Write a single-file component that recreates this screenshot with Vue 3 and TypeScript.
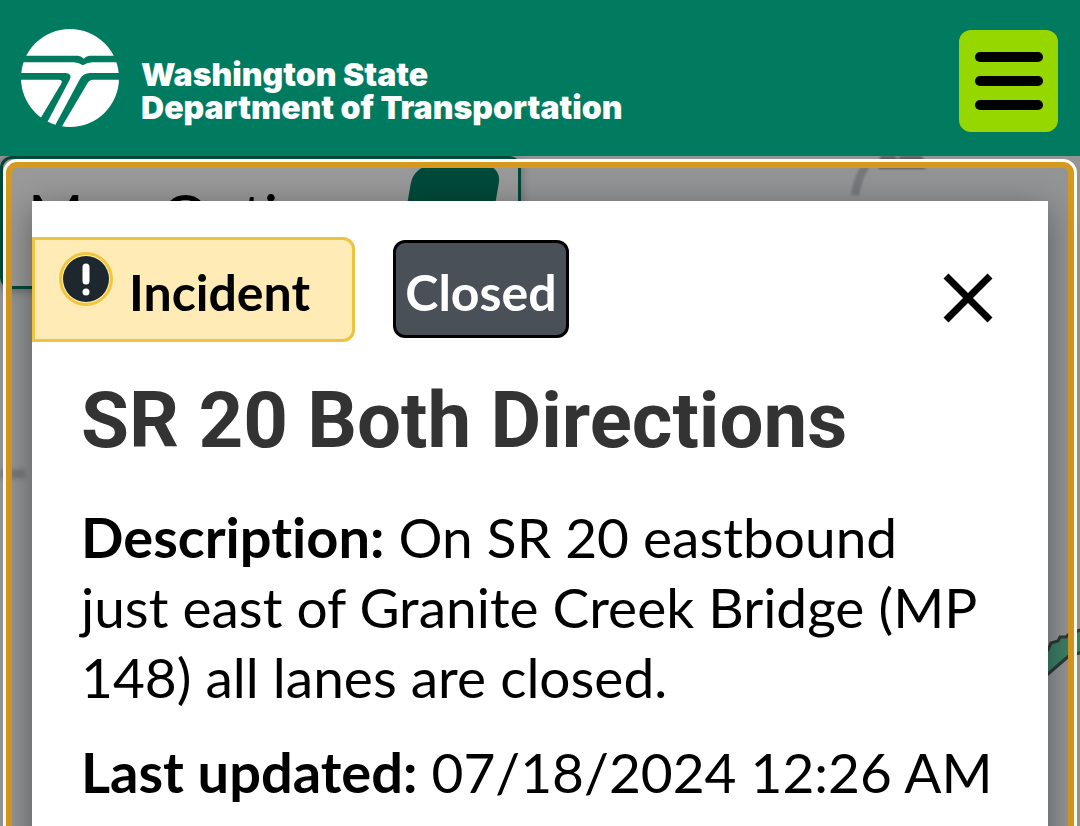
<script setup lang="ts">
import { ref } from 'vue'

interface Detail {
  label: string
  text: string
}

const menuOpen = ref(false)
const optionsOpen = ref(false)
const dialogOpen = ref(true)

const title = 'SR 20 Both Directions'
const details: Detail[] = [
  {
    label: 'Description:',
    text: 'On SR 20 eastbound just east of Granite Creek Bridge (MP 148) all lanes are closed.',
  },
  { label: 'Last updated:', text: '07/18/2024 12:26 AM' },
]
</script>

<template>
  <div class="page">
    <header class="header">
      <a class="brand" href="#">
        <svg class="logo" viewBox="0 0 292 292" aria-hidden="true">
          <circle cx="146" cy="146" r="146" fill="#fff" />
          <g fill="#007b5f">
            <path d="M0 80H170Q181 81 187 89Q193 81 204 80H292V99H212Q196 100 184 108Q174 100 158 99H0Z" />
            <path d="M0 131H134Q154 134 145 151L72 290L52 276L121 161Q124 151 112 151H0Z" />
            <path d="M292 131H205Q186 132 176 148L99 292H121L198 162Q204 151 214 151H292Z" />
          </g>
        </svg>
        <span class="brand-name">Washington State<br />Department of Transportation</span>
      </a>
      <button class="menu" type="button" aria-label="Menu" :aria-expanded="menuOpen" @click="menuOpen = !menuOpen">
        <span class="bar"></span>
        <span class="bar"></span>
        <span class="bar"></span>
      </button>
    </header>

    <main class="map">
      <svg class="road road-top" viewBox="0 0 80 44" aria-hidden="true">
        <path d="M6 39Q9 20 18 8" fill="none" stroke="#76787a" stroke-width="8" />
        <path d="M32 0H46L48 3L52 0H72Q78 6 76 13H30Q28 6 32 0Z" fill="#5c5d5e" />
      </svg>
      <svg class="road road-left" viewBox="0 0 25 12" aria-hidden="true">
        <path d="M0 6H25" stroke="#76787a" stroke-width="9" />
      </svg>
      <svg class="road road-right" viewBox="0 0 40 60" aria-hidden="true">
        <path d="M-4 32L8 24L11 17L18 15L20 11L26 11L30 7L44 3V26L30 29L8 48L-4 56Z" fill="#3c7f66" stroke="#2f3937" stroke-width="3" />
      </svg>

      <section class="options">
        <h2 class="options-title">Map Options</h2>
        <button
          class="toggle"
          type="button"
          aria-label="Toggle map options"
          :aria-expanded="optionsOpen"
          @click="optionsOpen = !optionsOpen"
        ></button>
      </section>

      <div class="focus-frame"></div>

      <article v-if="dialogOpen" class="dialog" role="dialog" aria-labelledby="alert-title">
        <div class="tags">
          <span class="tag incident">
            <svg class="alert" viewBox="0 0 54 54" aria-hidden="true">
              <circle cx="27" cy="27" r="27" fill="#f0c63c" />
              <circle cx="27" cy="27" r="24" fill="#ffefb8" />
              <circle cx="27" cy="27" r="23" fill="#1d272d" />
              <path d="M27 15V29" stroke="#fff" stroke-width="7" stroke-linecap="round" />
              <circle cx="27" cy="40" r="3.5" fill="#fff" />
            </svg>
            <span>Incident</span>
          </span>
          <span class="tag closed">Closed</span>
          <button class="close" type="button" aria-label="Close" @click="dialogOpen = false">
            <svg viewBox="0 0 50 50" aria-hidden="true">
              <path d="M3 3L47 47M47 3L3 47" stroke="#000" stroke-width="7" />
            </svg>
          </button>
        </div>
        <div class="body">
          <h1 id="alert-title" class="title">{{ title }}</h1>
          <p v-for="detail in details" :key="detail.label" class="detail">
            <strong>{{ detail.label }}</strong> {{ detail.text }}
          </p>
        </div>
      </article>
    </main>
  </div>
</template>

<style>
body {
  margin: 0;
}
</style>

<style scoped>
.page {
  display: flex;
  flex-direction: column;
  height: 100vh;
  overflow: hidden;
  font-family: Lato, "Liberation Sans", sans-serif;
  font-variant-ligatures: none;
  color: #000;
}

.header {
  display: flex;
  align-items: flex-start;
  justify-content: space-between;
  box-sizing: border-box;
  height: 156px;
  padding: 29px 22px 0 21px;
  background: #007b5f;
}

.brand {
  display: flex;
  gap: 22px;
  color: #fff;
  text-decoration: none;
}

.logo {
  width: 98px;
  height: 98px;
}

.brand-name {
  padding-top: 29px;
  font-family: Inter, "Liberation Sans", sans-serif;
  font-size: 32px;
  font-weight: 900;
  line-height: 33px;
  white-space: nowrap;
}

.menu {
  display: flex;
  flex-direction: column;
  align-items: center;
  justify-content: center;
  gap: 14px;
  width: 99px;
  height: 102px;
  margin-top: 1px;
  padding: 0;
  border: 0;
  border-radius: 12px;
  background: #97d700;
}

.bar {
  width: 68px;
  height: 10px;
  border-radius: 5px;
  background: #000;
}

.map {
  position: relative;
  flex: 1;
  overflow: hidden;
  background: #929496;
}

.road {
  position: absolute;
}

.road-top {
  top: 0;
  right: 151px;
  width: 80px;
  height: 44px;
  filter: blur(1px);
}

.road-left {
  top: 312px;
  left: 0;
  width: 25px;
  height: 12px;
  filter: blur(2px);
}

.road-right {
  top: 470px;
  right: 0;
  width: 40px;
  height: 60px;
}

.options {
  display: flex;
  align-items: flex-start;
  justify-content: space-between;
  box-sizing: border-box;
  width: 521px;
  height: 133px;
  padding: 6px 18px 0 25px;
  border: 3px solid #00483a;
  border-radius: 12px;
  background: #999;
  box-shadow: 0 2px 10px rgba(0, 0, 0, 0.3);
}

.options-title {
  margin: 20px 0 0;
  font-size: 60px;
  font-weight: 400;
  line-height: 60px;
}

.toggle {
  width: 88px;
  height: 80px;
  margin-right: 5px;
  padding: 0;
  border: 0;
  border-radius: 18px;
  background: #004a3a;
  transform: skewX(-10deg);
}

.focus-frame {
  position: absolute;
  inset: 3px 3px -20px;
  border: 3px solid #fffdf0;
  border-radius: 14px;
  box-shadow: inset 0 0 0 6px #d6991f;
  pointer-events: none;
}

.dialog {
  position: absolute;
  inset: 45px 32px -40px;
  background: #fff;
  box-shadow: 0 8px 32px rgba(0, 0, 0, 0.4);
}

.tags {
  display: flex;
  align-items: center;
  padding: 36px 55px 0 0;
}

.tag {
  box-sizing: border-box;
  font-size: 50px;
  font-weight: 700;
  line-height: 60px;
}

.incident {
  display: flex;
  gap: 16px;
  height: 105px;
  padding: 22px 42px 0 24px;
  border: 3px solid #ecc43f;
  border-radius: 0 12px 12px 0;
  background: #ffebb5;
}

.alert {
  width: 54px;
  height: 54px;
  margin-top: -10px;
}

.closed {
  min-width: 176px;
  height: 98px;
  margin: 0 0 1px 38px;
  padding: 19px 9px 0;
  border: 3px solid #000;
  border-radius: 12px;
  background: #495057;
  color: #fff;
  text-align: center;
}

.close {
  width: 50px;
  height: 50px;
  margin: 16px 0 0 auto;
  padding: 0;
  border: 0;
  background: none;
}

.close svg {
  display: block;
  width: 50px;
  height: 50px;
}

.body {
  padding: 33px 52px 0 49px;
}

.title {
  margin: 0 0 35px;
  color: #333;
  font-family: Roboto, "Liberation Sans", sans-serif;
  font-size: 78px;
  font-weight: 700;
  line-height: 92px;
}

.detail {
  margin: 0 0 25px;
  font-size: 55px;
  line-height: 70px;
}

.detail strong {
  font-size: 56px;
}
</style>
